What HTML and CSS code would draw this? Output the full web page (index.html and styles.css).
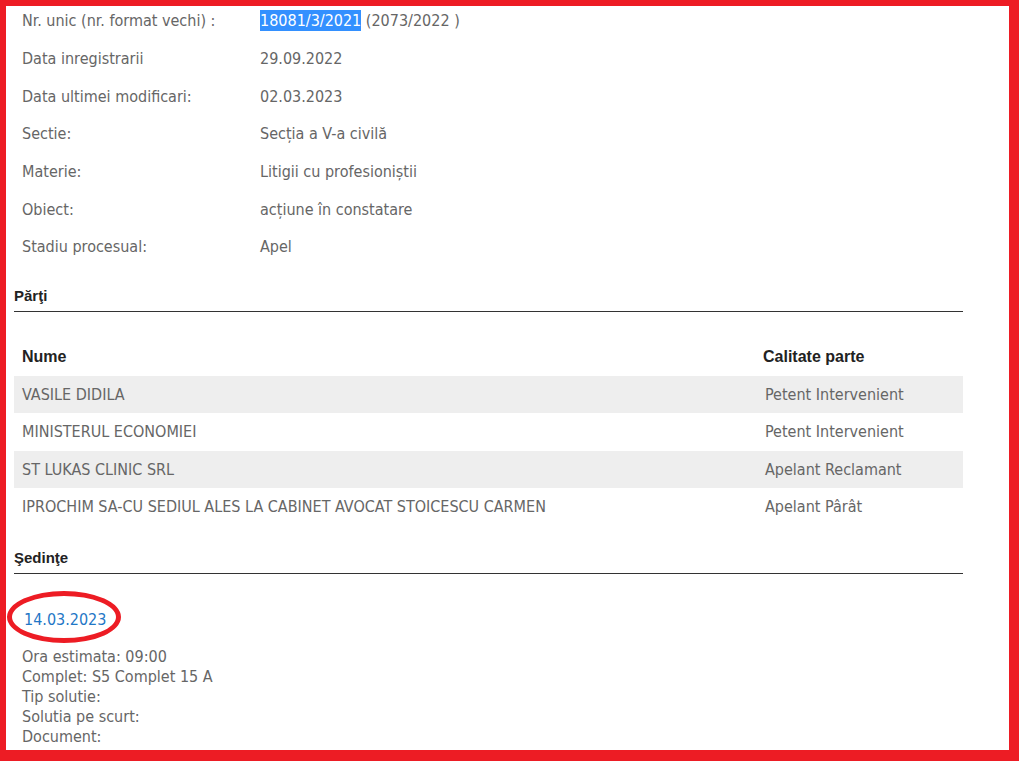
FILE: index.html
```html
<!DOCTYPE html>
<html lang="ro">
<head>
    <meta charset="UTF-8">
    <title>Dosar 18081/3/2021</title>
    <link rel="stylesheet" href="styles.css">
</head>
<body>
    <main class="dosar">
        <!-- Detalii dosar -->
        <div class="detalii">
            <div class="label">Nr. unic (nr. format vechi) :</div>
            <div class="value"><span class="selectat">18081/3/2021</span> (2073/2022 )</div>
            <div class="label">Data inregistrarii</div>
            <div class="value">29.09.2022</div>
            <div class="label">Data ultimei modificari:</div>
            <div class="value">02.03.2023</div>
            <div class="label">Sectie:</div>
            <div class="value">Secția a V-a civilă</div>
            <div class="label">Materie:</div>
            <div class="value">Litigii cu profesioniștii</div>
            <div class="label">Obiect:</div>
            <div class="value">acțiune în constatare</div>
            <div class="label">Stadiu procesual:</div>
            <div class="value">Apel</div>
        </div>

        <!-- Parti -->
        <h2 class="sectiune">Părţi</h2>
        <table class="parti">
            <thead>
                <tr>
                    <th>Nume</th>
                    <th class="col-calitate">Calitate parte</th>
                </tr>
            </thead>
            <tbody>
                <tr><td>VASILE DIDILA</td><td class="col-calitate">Petent Intervenient</td></tr>
                <tr><td>MINISTERUL ECONOMIEI</td><td class="col-calitate">Petent Intervenient</td></tr>
                <tr><td>ST LUKAS CLINIC SRL</td><td class="col-calitate">Apelant Reclamant</td></tr>
                <tr><td>IPROCHIM SA-CU SEDIUL ALES LA CABINET AVOCAT STOICESCU CARMEN</td><td class="col-calitate">Apelant Pârât</td></tr>
            </tbody>
        </table>

        <!-- Sedinte -->
        <h2 class="sectiune">Şedinţe</h2>
        <div class="sedinta">
            <a href="#" class="data-sedinta">14.03.2023</a>
            <div class="sedinta-info">
                <div>Ora estimata: 09:00</div>
                <div>Complet: S5 Complet 15 A</div>
                <div>Tip solutie:</div>
                <div>Solutia pe scurt:</div>
                <div>Document:</div>
            </div>
        </div>
    </main>

    <!-- adnotari (cerc + chenar rosu) -->
    <div class="cerc"></div>
    <div class="chenar"></div>
</body>
</html>
```

FILE: styles.css
```css
:root {
    --text-gray: #666666;
    --text-dark: #222222;
    --row-bg: #eeeeee;
    --line: #333333;
    --link: #1f77c6;
    --mark-red: #ed1c24;
}

body {
    margin: 0;
    background: #ffffff;
    font-family: 'DejaVu Sans Condensed', 'DejaVu Sans', sans-serif;
    font-stretch: condensed;
    font-size: 16px;
    color: var(--text-gray);
    height: 761px;
    overflow: hidden;
}

.dosar {
    width: 949px;
    margin-left: 14px;
}

/* Detalii */
.detalii {
    display: grid;
    grid-template-columns: 246px 1fr;
    grid-auto-rows: 37.67px;
    align-items: center;
    margin-top: 2px;
}

.detalii .label {
    padding-left: 8px;
}

.selectat {
    background: #3390ff;
    color: #ffffff;
    padding: 1px 0;
}

/* Titluri sectiuni */
.sectiune {
    margin: 21px 0 0 0;
    padding-bottom: 7px;
    font-family: 'Liberation Sans', Arial, sans-serif;
    font-stretch: normal;
    font-size: 15px;
    font-weight: bold;
    color: var(--text-dark);
    line-height: 17px;
    border-bottom: 1px solid var(--line);
}

/* Tabel parti */
.parti {
    width: 100%;
    border-collapse: collapse;
    margin-top: 26px;
    margin-bottom: 23px;
}

.parti th {
    text-align: left;
    font-family: 'Liberation Sans', Arial, sans-serif;
    font-stretch: normal;
    font-size: 16px;
    color: var(--text-dark);
    height: 38px;
    padding: 0 8px;
}

.parti td {
    height: 37.5px;
    padding: 0 8px;
}

.parti .col-calitate {
    width: 190px;
}

.parti th.col-calitate {
    padding-left: 6px;
}

.parti tbody tr:nth-child(odd) {
    background: var(--row-bg);
}

/* Sedinte */
.sedinta {
    padding-left: 8px;
    padding-top: 36px;
}

.data-sedinta {
    display: block;
    padding-left: 2px;
    color: var(--link);
    text-decoration: none;
    line-height: 20px;
}

.sedinta-info {
    margin-top: 17px;
    line-height: 20px;
}

/* Adnotari */
.cerc {
    position: absolute;
    left: 7px;
    top: 591px;
    width: 104px;
    height: 42px;
    border: 5px solid var(--mark-red);
    border-radius: 50%;
}

.chenar {
    position: fixed;
    inset: 0;
    border-style: solid;
    border-color: var(--mark-red);
    border-width: 6px 10px 11px 6px;
    pointer-events: none;
}
```
